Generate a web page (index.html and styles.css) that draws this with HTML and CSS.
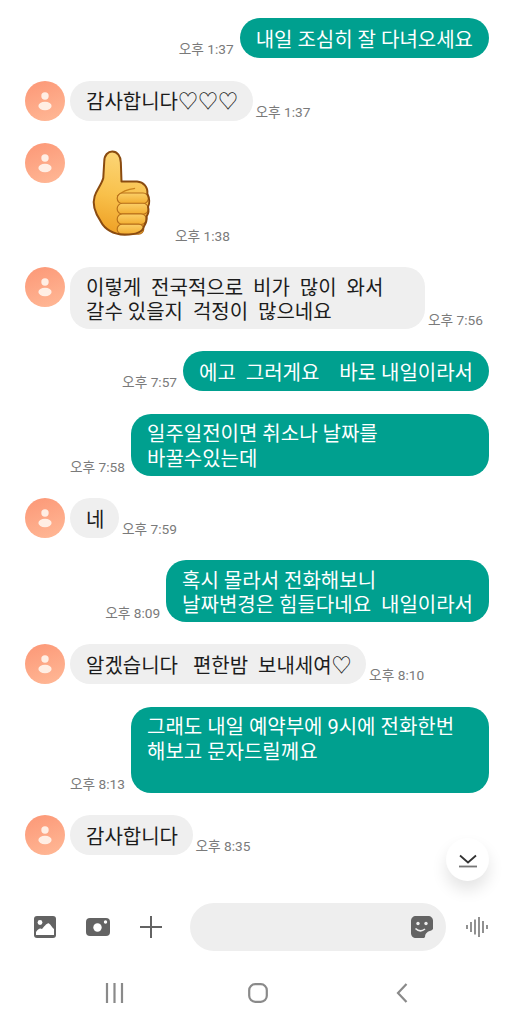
FILE: index.html
```html
<!DOCTYPE html>
<html lang="ko">
<head>
    <meta charset="UTF-8">
    <meta name="viewport" content="width=device-width, initial-scale=1.0">
    <title>메시지</title>
    <link rel="stylesheet" href="styles.css">
</head>
<body>
    <div class="chat">
        <div class="row sent">
            <span class="time">오후 1:37</span>
            <div class="bubble">내일 조심히 잘 다녀오세요</div>
        </div>
        <div class="row recv">
            <div class="avatar"><svg viewBox="0 0 40 40"><circle cx="20" cy="15" r="3.7"/><ellipse cx="20" cy="25" rx="6.6" ry="4.2"/></svg></div>
            <div class="bubble">감사합니다♡♡♡</div>
            <span class="time">오후 1:37</span>
        </div>
        <div class="row recv">
            <div class="avatar"><svg viewBox="0 0 40 40"><circle cx="20" cy="15" r="3.7"/><ellipse cx="20" cy="25" rx="6.6" ry="4.2"/></svg></div>
            <div class="sticker">
                <svg class="thumb" viewBox="90 55 190 270">
                    <defs>
                        <linearGradient id="skin" x1="0.5" y1="0" x2="0.35" y2="1">
                            <stop offset="0" stop-color="#fcd678"/>
                            <stop offset="0.55" stop-color="#f8c04a"/>
                            <stop offset="1" stop-color="#ee9f24"/>
                        </linearGradient>
                        <linearGradient id="knuckle" x1="0" y1="0" x2="0" y2="1">
                            <stop offset="0" stop-color="#fbcf68"/>
                            <stop offset="1" stop-color="#f2ad30"/>
                        </linearGradient>
                    </defs>
                    <path class="hand" d="M133 95C133 75 145 65 157 65C172 65 183 78 183 98L185 155L232 155C252 157 265 172 263 192C270 205 270 222 265 232C268 242 266 252 261 260C262 272 258 282 253 290C250 306 235 316 195 316C160 314 135 300 122 275C105 250 96 225 104 200C110 180 125 165 130 145Z"/>
                    <path class="crease" d="M172 200C185 186 205 178 226 176"/>
                    <rect class="finger" x="172" y="190" width="94" height="32" rx="16"/>
                    <rect class="finger" x="172" y="221" width="94" height="33" rx="16"/>
                    <rect class="finger" x="172" y="253" width="88" height="32" rx="16"/>
                    <rect class="finger" x="172" y="284" width="80" height="30" rx="15"/>
                    <path class="outline" d="M133 95C133 75 145 65 157 65C172 65 183 78 183 98L185 155L232 155C252 157 265 172 263 192C270 205 270 222 265 232C268 242 266 252 261 260C262 272 258 282 253 290C250 306 235 316 195 316C160 314 135 300 122 275C105 250 96 225 104 200C110 180 125 165 130 145Z"/>
                </svg>
            </div>
            <span class="time">오후 1:38</span>
        </div>
        <div class="row recv">
            <div class="avatar"><svg viewBox="0 0 40 40"><circle cx="20" cy="15" r="3.7"/><ellipse cx="20" cy="25" rx="6.6" ry="4.2"/></svg></div>
            <div class="bubble long">이렇게  전국적으로  비가  많이  와서<br>갈수 있을지  걱정이  많으네요</div>
            <span class="time">오후 7:56</span>
        </div>
        <div class="row sent">
            <span class="time">오후 7:57</span>
            <div class="bubble">에고  그러게요    바로 내일이라서</div>
        </div>
        <div class="row sent">
            <span class="time">오후 7:58</span>
            <div class="bubble wide">일주일전이면 취소나 날짜를<br>바꿀수있는데</div>
        </div>
        <div class="row recv">
            <div class="avatar"><svg viewBox="0 0 40 40"><circle cx="20" cy="15" r="3.7"/><ellipse cx="20" cy="25" rx="6.6" ry="4.2"/></svg></div>
            <div class="bubble">네</div>
            <span class="time">오후 7:59</span>
        </div>
        <div class="row sent">
            <span class="time">오후 8:09</span>
            <div class="bubble">혹시 몰라서 전화해보니<br>날짜변경은 힘들다네요  내일이라서</div>
        </div>
        <div class="row recv">
            <div class="avatar"><svg viewBox="0 0 40 40"><circle cx="20" cy="15" r="3.7"/><ellipse cx="20" cy="25" rx="6.6" ry="4.2"/></svg></div>
            <div class="bubble">알겠습니다   편한밤  보내세여♡</div>
            <span class="time">오후 8:10</span>
        </div>
        <div class="row sent">
            <span class="time">오후 8:13</span>
            <div class="bubble wide">그래도 내일 예약부에 9시에 전화한번<br>해보고 문자드릴께요<br>&nbsp;</div>
        </div>
        <div class="row recv">
            <div class="avatar"><svg viewBox="0 0 40 40"><circle cx="20" cy="15" r="3.7"/><ellipse cx="20" cy="25" rx="6.6" ry="4.2"/></svg></div>
            <div class="bubble">감사합니다</div>
            <span class="time">오후 8:35</span>
        </div>

        <div class="scroll-btn">
            <svg viewBox="0 0 20 16" width="20" height="16"><path class="line-dark" d="M2 3.5L10 10.5L18 3.5"/><path class="line-grey" d="M1 14.5H19"/></svg>
        </div>
    </div>

    <div class="composer">
        <svg class="icon-image" viewBox="0 0 22 22" width="22" height="22">
            <rect width="22" height="22" rx="3" fill="#636363"/>
            <circle cx="6" cy="6.5" r="2.4" fill="#fff"/>
            <path d="M2 19V16C4 13 6 11.5 8 13C10 11 13 6.5 15 7.5C17 9 18.5 12 20 13V19Z" fill="#fff"/>
        </svg>
        <svg class="icon-camera" viewBox="0 0 24 18" width="24" height="18">
            <rect width="24" height="18" rx="4" fill="#636363"/>
            <circle cx="11.5" cy="9.5" r="4.2" fill="#fff"/>
            <circle cx="19.5" cy="4" r="1.7" fill="#fff"/>
        </svg>
        <svg class="icon-plus" viewBox="0 0 22 22" width="22" height="22">
            <path d="M11 0V22M0 11H22" stroke="#636363" stroke-width="2" fill="none"/>
        </svg>
        <div class="field">
            <svg viewBox="0 0 22 22" width="22" height="22">
                <path d="M5 0H17C20 0 22 2 22 5V13L13 22H5C2 22 0 20 0 17V5C0 2 2 0 5 0Z" fill="#636363"/>
                <circle cx="7" cy="7.5" r="1.7" fill="#eee"/>
                <circle cx="15" cy="7.5" r="1.7" fill="#eee"/>
                <path d="M4.5 12.5C7.5 15.5 11 15.5 14 13" stroke="#eee" stroke-width="1.6" fill="none"/>
                <path d="M14 21C14 17.5 16.5 15 21 14.5C20.5 18 18 20.5 14 21Z" fill="#eee"/>
            </svg>
        </div>
        <svg class="icon-voice" viewBox="0 0 24 20" width="24" height="20">
            <path d="M1 8V12M5 5V15M9 2.5V17.5M13 0V20M17 4V16M21 8V12" stroke="#636363" stroke-width="1.4" fill="none"/>
        </svg>
    </div>

    <div class="navbar">
        <svg viewBox="0 0 19 20" width="19" height="20"><path d="M2 0V20M9.5 0V20M17 0V20" stroke="#8a8a8a" stroke-width="2.2" fill="none"/></svg>
        <svg viewBox="0 0 20 20" width="20" height="20"><rect x="1.2" y="1.2" width="17.6" height="17.6" rx="6" stroke="#8a8a8a" stroke-width="2.2" fill="none"/></svg>
        <svg viewBox="0 0 12 20" width="12" height="20"><path d="M10.5 1L2 10L10.5 19" stroke="#8a8a8a" stroke-width="2.2" fill="none"/></svg>
    </div>
</body>
</html>
```

FILE: styles.css
```css
html, body { margin: 0; padding: 0; }
body { width: 514px; height: 1024px; overflow: hidden; background: #fff; display: flex; flex-direction: column; font-family: Roboto, "Noto Sans CJK KR", sans-serif; }

.chat { position: relative; flex: 1; padding: 18.25px 25px 0; display: flex; flex-direction: column; gap: 22.25px; }
.row { display: flex; align-items: flex-end; }
.sent { justify-content: flex-end; gap: 6px; }
.recv { gap: 3px; }

.bubble { display: flex; align-items: center; box-sizing: border-box; min-height: 40px; padding: 8.5px 16px 4.5px; font-size: 20px; line-height: 24.5px; white-space: pre; border-radius: 20px; }
.sent .bubble { background: #00a08f; color: #fff; }
.recv .bubble { background: #efefef; color: #1c1c1c; padding-right: 14.5px; }
.wide { width: 358px; }
.long { width: 355px; }

.time { font-size: 13.7px; line-height: 16px; color: #7a7a7a; margin-bottom: 1px; white-space: nowrap; }

.avatar { width: 40px; height: 40px; border-radius: 50%; margin-right: 2px; align-self: flex-start; background: linear-gradient(160deg, #fc9776, #ffb997); }
.avatar svg { display: block; fill: #ffeee4; }

.sticker { width: 102px; height: 102px; padding: 5px 0 0 20px; box-sizing: border-box; }
.thumb { display: block; width: 63px; height: 90px; }
.hand { fill: url(#skin); }
.crease { fill: none; stroke: #c9821c; stroke-width: 4; }
.finger { fill: url(#knuckle); stroke: #b8701a; stroke-width: 3.5; }
.outline { fill: none; stroke: #8a4b10; stroke-width: 6; stroke-linejoin: round; }

.scroll-btn { position: absolute; right: 25px; bottom: 22px; width: 43px; height: 43px; border-radius: 50%; background: #fff; display: flex; align-items: center; justify-content: center; box-shadow: 0 9px 16px rgba(0, 0, 0, .11); }
.line-dark { fill: none; stroke: #333; stroke-width: 1.8; }
.line-grey { fill: none; stroke: #777; stroke-width: 1.8; }

.composer { display: flex; align-items: center; height: 48px; padding-left: 34px; }
.icon-camera { margin-left: 30px; }
.icon-plus { margin-left: 30px; }
.field { width: 256px; height: 48px; margin-left: 28px; padding-right: 13px; box-sizing: border-box; background: #eeeeee; border-radius: 24px; display: flex; align-items: center; justify-content: flex-end; }
.icon-voice { margin-left: 20px; }

.navbar { height: 73px; box-sizing: border-box; padding: 32px 0 0 43px; display: grid; grid-template-columns: repeat(3, 143.5px); justify-items: center; align-items: start; }
.navbar svg { display: block; }
```
